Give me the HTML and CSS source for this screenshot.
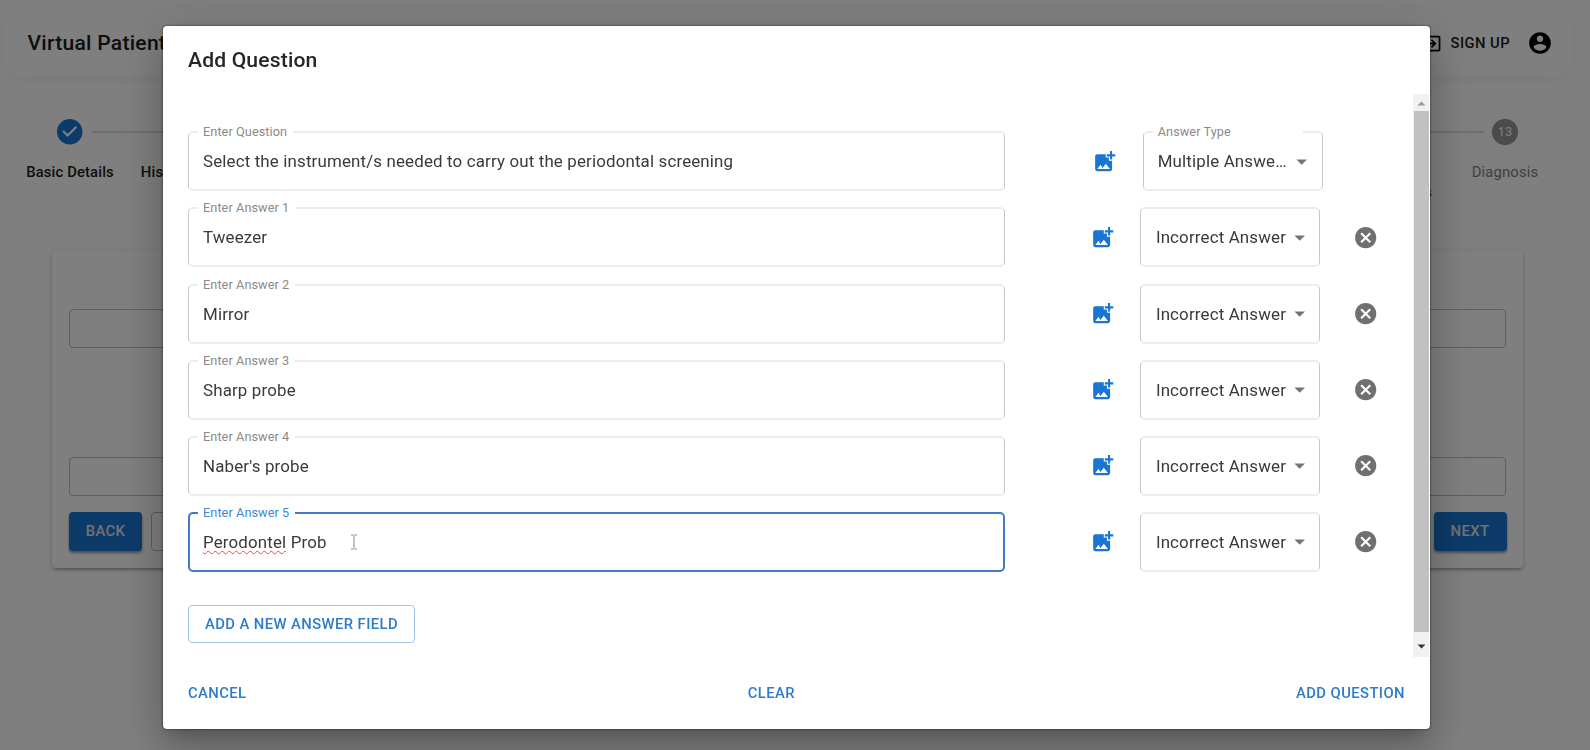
FILE: index.html
```html
<!DOCTYPE html>
<html lang="en">
<head>
<meta charset="utf-8">
<title>Virtual Patient</title>
<link rel="stylesheet" href="styles.css">
</head>
<body>
<svg class="defs" aria-hidden="true">
  <symbol id="add-photo" viewBox="0 0 24 24"><path d="M19 7v2.990s-1.990.01-2 0V7h-3s.01-1.990 0-2h3V2h2v3h3v2h-3zm-3 4V8h-3V5H5c-1.100 0-2 .9-2 2v12c0 1.100.9 2 2 2h12c1.100 0 2-.9 2-2v-8h-3zM5 19l3-4 2 3 3-4 4 5H5z"/></symbol>
  <symbol id="cancel" viewBox="0 0 24 24"><path d="M12 2C6.470 2 2 6.470 2 12s4.470 10 10 10 10-4.470 10-10S17.530 2 12 2zm5 13.590L15.590 17 12 13.410 8.410 17 7 15.590 10.590 12 7 8.410 8.410 7 12 10.590 15.590 7 17 8.410 13.410 12 17 15.590z"/></symbol>
  <symbol id="drop" viewBox="0 0 24 24"><path d="M7 10l5 5 5-5z"/></symbol>
</svg>

<div class="page">
  <header class="topbar">
    <span class="brand">Virtual Patient</span>
    <div class="account">
      <svg class="exit" viewBox="0 0 24 24"><path d="M10.090 15.590L11.500 17l5-5-5-5-1.410 1.410L12.670 11H3v2h9.670l-2.580 2.590zM19 3H5c-1.110 0-2 .9-2 2v4h2V5h14v14H5v-4H3v4c0 1.100.89 2 2 2h14c1.100 0 2-.9 2-2V5c0-1.100-.9-2-2-2z"/></svg>
      <span class="signup">SIGN UP</span>
      <svg class="avatar" viewBox="0 0 24 24"><path d="M12 2C6.480 2 2 6.480 2 12s4.480 10 10 10 10-4.480 10-10S17.520 2 12 2zm0 3c1.660 0 3 1.340 3 3s-1.340 3-3 3-3-1.340-3-3 1.340-3 3-3zm0 14.200c-2.500 0-4.710-1.280-6-3.220.03-1.990 4-3.080 6-3.080 1.990 0 5.970 1.090 6 3.080-1.290 1.940-3.500 3.220-6 3.220z"/></svg>
    </div>
  </header>

  <div class="stepper">
    <div class="step">
      <svg class="step-icon" viewBox="0 0 24 24"><path d="M12 0a12 12 0 1 0 0 24 12 12 0 0 0 0-24zm-2 17l-5-5 1.400-1.400 3.600 3.600 7.600-7.600L19 8l-9 9z"/></svg>
      <span class="step-label">Basic Details</span>
    </div>
    <div class="connector"></div>
    <div class="step next-step"><span class="step-label">His</span></div>
    <div class="step prev-step"><span class="step-label">s</span></div>
    <div class="connector late"></div>
    <div class="step pending">
      <span class="step-number">13</span>
      <span class="step-label">Diagnosis</span>
    </div>
  </div>

  <section class="panel">
    <div class="panel-field"></div>
    <div class="panel-field second"></div>
    <div class="panel-actions">
      <span class="solid">BACK</span>
      <span class="reset"></span>
      <span class="solid last">NEXT</span>
    </div>
  </section>
</div>

<div class="backdrop">
  <div class="dialog" role="dialog">
    <h2 class="title">Add Question</h2>
    <div class="content">
      <div class="form">
        <div class="row first">
          <div class="field"><span class="label">Enter Question</span>Select the instrument/s needed to carry out the periodontal screening</div>
          <svg class="photo"><use href="#add-photo"/></svg>
          <div class="select"><span class="label wide">Answer Type</span><span>Multiple Answe…</span><svg class="arrow"><use href="#drop"/></svg></div>
        </div>
        <div class="row">
          <div class="field"><span class="label">Enter Answer 1</span>Tweezer</div>
          <svg class="photo"><use href="#add-photo"/></svg>
          <div class="select"><span>Incorrect Answer</span><svg class="arrow"><use href="#drop"/></svg></div>
          <svg class="remove"><use href="#cancel"/></svg>
        </div>
        <div class="row">
          <div class="field"><span class="label">Enter Answer 2</span>Mirror</div>
          <svg class="photo"><use href="#add-photo"/></svg>
          <div class="select"><span>Incorrect Answer</span><svg class="arrow"><use href="#drop"/></svg></div>
          <svg class="remove"><use href="#cancel"/></svg>
        </div>
        <div class="row">
          <div class="field"><span class="label">Enter Answer 3</span>Sharp probe</div>
          <svg class="photo"><use href="#add-photo"/></svg>
          <div class="select"><span>Incorrect Answer</span><svg class="arrow"><use href="#drop"/></svg></div>
          <svg class="remove"><use href="#cancel"/></svg>
        </div>
        <div class="row">
          <div class="field"><span class="label">Enter Answer 4</span>Naber's probe</div>
          <svg class="photo"><use href="#add-photo"/></svg>
          <div class="select"><span>Incorrect Answer</span><svg class="arrow"><use href="#drop"/></svg></div>
          <svg class="remove"><use href="#cancel"/></svg>
        </div>
        <div class="row">
          <div class="field focused"><span class="label">Enter Answer 5</span><span class="misspelt">Perodontel</span>&nbsp;Prob
            <svg class="ibeam" viewBox="0 0 8 16"><path d="M1 1h2.500M4.500 1H7M1 15h2.500M4.500 15H7M4 1.500v13"/></svg></div>
          <svg class="photo"><use href="#add-photo"/></svg>
          <div class="select"><span>Incorrect Answer</span><svg class="arrow"><use href="#drop"/></svg></div>
          <svg class="remove"><use href="#cancel"/></svg>
        </div>
        <span class="outlined">ADD A NEW ANSWER FIELD</span>
      </div>
      <div class="scrollbar">
        <svg class="scroll-up" viewBox="0 0 16 17"><path d="M4.500 11.500l4-4 4 4z"/></svg>
        <div class="thumb"></div>
        <svg class="scroll-down" viewBox="0 0 16 25"><path d="M4.500 12.500l4 4 4-4z"/></svg>
      </div>
    </div>
    <div class="actions"><span>CANCEL</span><span>CLEAR</span><span>ADD QUESTION</span></div>
  </div>
</div>
</body>
</html>
```
FILE: styles.css
```css
* { box-sizing: border-box; }
body { margin: 0; height: 750px; overflow: hidden; background: #fff; font-family: Roboto, "Liberation Sans", sans-serif; color: #1c1c1c; }
.defs { position: absolute; width: 0; height: 0; }
svg { display: block; flex: none; fill: currentColor; }

/* Page behind the dialog */
.page { height: 750px; overflow: hidden; }
.topbar { display: flex; align-items: center; justify-content: space-between; width: 1570px; height: 66px; margin: 10px 0 0 3px; padding: 0 20px 0 24.5px; border-radius: 21px; box-shadow: 0 2px 12px rgba(0,0,0,.06); }
.brand { margin-top: -1px; font-size: 21.1px; font-weight: 500; letter-spacing: .25px; }
.account { display: flex; align-items: center; color: #000; }
.exit { width: 21px; height: 21px; }
.signup { margin: 0 17px 0 8px; font-size: 14.8px; font-weight: 500; letter-spacing: .42px; color: #1c1c1c; }
.avatar { width: 26px; height: 26px; }

.stepper { display: flex; align-items: flex-start; height: 131px; padding: 43px 27px 0 26px; }
.step { display: flex; flex-direction: column; align-items: center; width: 88px; font-size: 14.8px; font-weight: 500; line-height: 21px; letter-spacing: .15px; white-space: nowrap; }
.step-icon { width: 25.5px; height: 25.5px; color: #1976d2; }
.step-label { margin-top: 17px; }
.connector { width: 120px; height: 2px; margin: 12px -72px 0 -22px; background: #dcdcdc; }
.next-step { width: 24px; padding-top: 25.5px; }
.prev-step { width: 10px; margin-left: auto; padding-top: 46px; }
.connector.late { width: 60px; margin: 12px -15px 0 -9px; }
.pending { width: 67px; margin: 0 24.5px 0 2.5px; color: #7c7c7c; font-weight: 400; }
.step-number { display: grid; place-items: center; width: 25.5px; height: 25.5px; border-radius: 50%; background: #969696; color: #fff; font-size: 12.7px; }

.panel { width: 1471px; height: 318px; margin: 43px 0 0 52px; padding: 59px 17px 0; border-radius: 4px; box-shadow: 0 3px 3px -2px rgba(0,0,0,.25), 0 2px 5px rgba(0,0,0,.22); }
.panel-field { height: 39px; border: 1px solid #a3c3de; border-radius: 4px; }
.second { margin-top: 109px; }
.panel-actions { display: flex; margin-top: 16px; }
.solid { display: grid; place-items: center; width: 73px; height: 39px; border-radius: 4px; background: #1976d2; box-shadow: 0 2px 3px rgba(0,0,0,.4); color: #e4e4e4; font-size: 14.8px; font-weight: 500; line-height: 37px; letter-spacing: .42px; }
.reset { width: 90px; height: 39px; margin-left: 8.5px; border: 1px solid #d8a8a8; border-radius: 4px; }
.last { margin: 0 -.5px 0 auto; }

/* Dialog */
.backdrop { position: fixed; inset: 0; padding: 26px 160px 0 163px; background: rgba(0,0,0,.5); }
.dialog { display: flex; flex-direction: column; width: 1267px; height: 703px; border-radius: 4px; background: #fff; box-shadow: 0 11px 15px -7px rgba(0,0,0,.2), 0 24px 38px 3px rgba(0,0,0,.14), 0 9px 46px 8px rgba(0,0,0,.12), 0 0 2px rgba(0,0,0,.8); }
.title { height: 68px; margin: 0; padding: 0 25px; font-size: 21.1px; font-weight: 500; line-height: 68px; letter-spacing: .16px; color: #262626; }
.content { display: flex; height: 563px; }
.form { width: 1250px; padding: 37.4px 0 0 25px; }
.row { display: flex; align-items: center; height: 60px; margin-bottom: 16.1px; }
.field { position: relative; display: flex; align-items: center; width: 817px; height: 100%; padding: 0 14px; border: solid #ececec; border-width: 2px 1px; border-left-color: #c8c8c8; border-right-color: #c8c8c8; border-radius: 5px; font-size: 16.9px; letter-spacing: .155px; color: #3a3a3a; }
.label { position: absolute; top: -9px; left: 9px; padding: 0 6px 0 5px; background: #fff; font-size: 12.7px; line-height: 16px; letter-spacing: .08px; color: #8a8a8a; }
.wide { width: 150px; }
.focused { border: 2px solid #4279c9; padding-left: 13px; }
.focused .label { left: 8px; color: #3c89d6; }
.misspelt { text-decoration: underline wavy #f04a4a 1px; text-underline-offset: 2px; text-decoration-skip-ink: none; }
.ibeam { width: 8px; height: 16px; margin-left: 23px; fill: none; stroke: #888; stroke-width: 1; }
.photo { width: 25.4px; height: 25.4px; margin-left: 84.5px; color: #1976d2; }
.first .photo { margin-left: 87px; }
.select { position: relative; display: flex; align-items: center; justify-content: space-between; width: 180px; height: 100%; margin-left: 25.3px; padding: 0 7px 0 14.7px; border: solid #ececec; border-width: 2px 1px; border-left-color: #c8c8c8; border-right-color: #c8c8c8; border-radius: 5px; font-size: 16.9px; letter-spacing: .16px; color: #3a3a3a; white-space: nowrap; }
.first .select { padding-left: 14px; }
.arrow { width: 25.4px; height: 25.4px; color: #757575; }
.remove { width: 25.4px; height: 25.4px; margin-left: 33px; color: #707070; }
.outlined { display: inline-grid; place-items: center; width: 227px; height: 38px; margin-top: 16.6px; border: 1px solid #9fc4ea; border-radius: 4px; font-size: 14.8px; font-weight: 500; line-height: 34px; letter-spacing: .42px; color: #2e7bcb; }
.scrollbar { width: 16px; background: #f1f1f1; }
.scroll-up { width: 16px; height: 17px; color: #999; }
.thumb { height: 521px; margin-left: 1px; background: #c1c1c1; }
.scroll-down { width: 16px; height: 25px; color: #333; }
.actions { display: flex; align-items: center; justify-content: space-between; height: 72px; padding: 0 25px; font-size: 14.8px; font-weight: 500; letter-spacing: .42px; color: #2e7bcb; }
```
